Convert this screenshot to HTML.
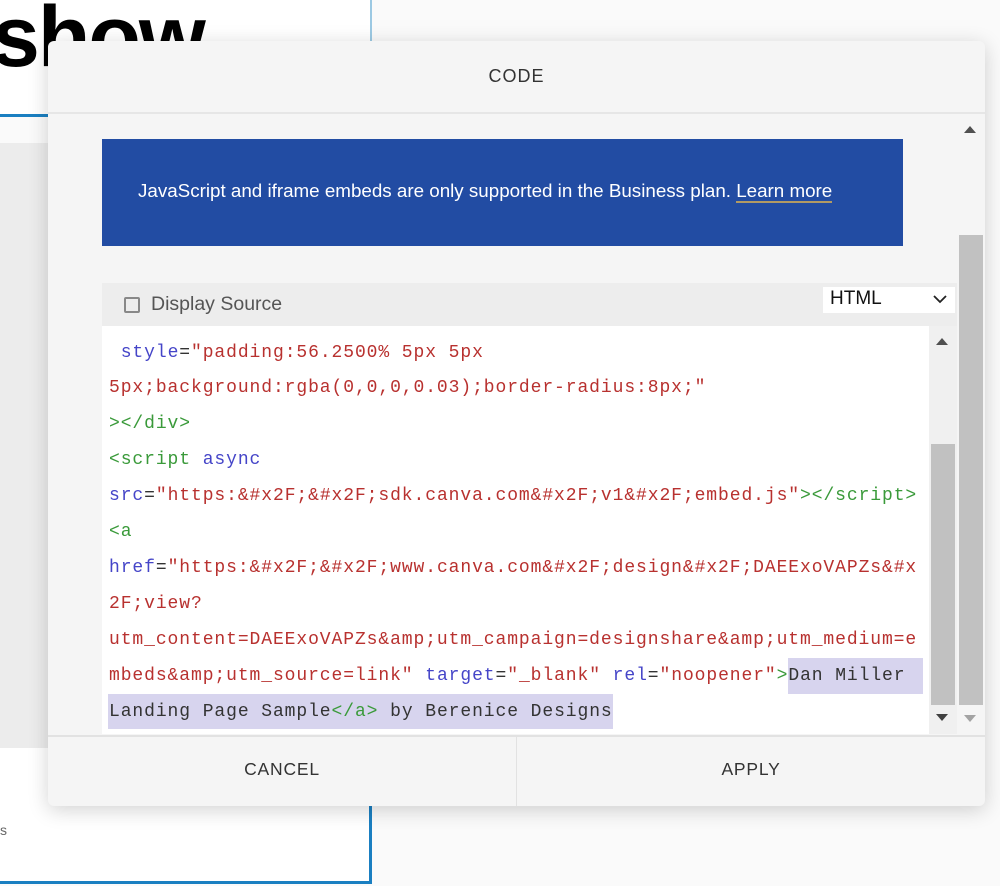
<!DOCTYPE html>
<html><head><style>
*{margin:0;padding:0;box-sizing:border-box}
body{width:1000px;height:886px;background:#fafafa;position:relative;overflow:hidden;font-family:"Liberation Sans",sans-serif}
.abs{position:absolute}
.code{font-family:"Liberation Mono",monospace;font-size:18px;letter-spacing:0.91px;color:#333;white-space:pre}
.cl{position:absolute;left:109px;height:36px;line-height:36px}
.a{color:#4545c8}.s{color:#b8312f}.t{color:#3a9a3a}.p{color:#333}
.hl{background:#d7d4ee}
</style></head><body>
<div class="abs" style="left:0;top:0;width:372px;height:115px;background:#fff"></div>
<div class="abs" style="left:-8px;top:-12px;font-size:86px;font-weight:bold;color:#000;font-family:'Liberation Sans',sans-serif;letter-spacing:-2px">show</div>
<div class="abs" style="left:370px;top:0;width:2px;height:42px;background:#9cc9e3"></div>
<div class="abs" style="left:0;top:114px;width:50px;height:3px;background:#1a7fc1"></div>
<div class="abs" style="left:0;top:143px;width:50px;height:605px;background:#ececec"></div>
<div class="abs" style="left:0;top:748px;width:372px;height:136px;background:#fff"></div>
<div class="abs" style="left:369px;top:800px;width:3px;height:84px;background:#1a7fc1"></div>
<div class="abs" style="left:0;top:881px;width:372px;height:3px;background:#1a7fc1"></div>
<div class="abs" style="left:0;top:822px;font-size:14px;color:#666">s</div>

<div class="abs" style="left:48px;top:41px;width:937px;height:765px;background:#f5f5f5;border-radius:6px;box-shadow:0 4px 20px rgba(0,0,0,.18);overflow:hidden">
 <div class="abs" style="left:0;top:0;width:937px;height:73px;border-bottom:2px solid #e6e6e6;text-align:center;line-height:70px;font-size:18px;letter-spacing:1px;color:#333">CODE</div>
 <div class="abs" style="left:54px;top:98px;width:801px;height:107px;background:#224ca3;color:#fff;font-size:18.8px;padding:41px 0 0 36px;white-space:nowrap">JavaScript and iframe embeds are only supported in the Business plan. <span style="border-bottom:2px solid #b29a63">Learn more</span></div>
 <div class="abs" style="left:54px;top:242px;width:855px;height:43px;background:#ededed"></div>
 <div class="abs" style="left:76px;top:256px;width:16px;height:16px;border:2px solid #888;border-radius:2px"></div>
 <div class="abs" style="left:103px;top:252px;font-size:19.5px;color:#555">Display Source</div>
 <div class="abs" style="left:775px;top:246px;width:132px;height:26px;background:#fff;font-size:19px;color:#111;padding:1px 0 0 7px">HTML<svg style="position:absolute;right:8px;top:8px" width="14" height="9" viewBox="0 0 14 9"><path d="M1 1l6 6 6-6" fill="none" stroke="#222" stroke-width="1.8"/></svg></div>
 <div class="abs" style="left:911px;top:194px;width:24px;height:470px;background:#c1c1c1"></div>
 <div class="abs" style="left:916px;top:85px;width:0;height:0;border-left:6px solid transparent;border-right:6px solid transparent;border-bottom:7px solid #505050"></div>
 <div class="abs" style="left:916px;top:674px;width:0;height:0;border-left:6px solid transparent;border-right:6px solid transparent;border-top:7px solid #a3a3a3"></div>
 <div class="abs" style="left:0;top:694px;width:937px;height:71px;border-top:2px solid #e2e2e2"></div>
 <div class="abs" style="left:468px;top:695px;width:1px;height:70px;background:#e2e2e2"></div>
 <div class="abs" style="left:0;top:695px;width:468px;height:70px;line-height:66px;text-align:center;font-size:17.5px;letter-spacing:.8px;color:#333">CANCEL</div>
 <div class="abs" style="left:469px;top:695px;width:468px;height:70px;line-height:66px;text-align:center;font-size:17.5px;letter-spacing:.8px;color:#333">APPLY</div>
</div>

<div class="abs" style="left:102px;top:326px;width:827px;height:408px;background:#fff"></div>
<div class="abs" style="left:929px;top:326px;width:28px;height:408px;background:#f0f0f0"></div>
<div class="abs" style="left:931px;top:444px;width:24px;height:261px;background:#c1c1c1"></div>
<div class="abs" style="left:936px;top:338px;border-left:6px solid transparent;border-right:6px solid transparent;border-bottom:7px solid #505050"></div>
<div class="abs" style="left:936px;top:714px;border-left:6px solid transparent;border-right:6px solid transparent;border-top:7px solid #404040"></div>
<div class="abs hl" style="left:788px;top:658px;width:135px;height:36px"></div>
<div class="abs hl" style="left:108px;top:694px;width:505px;height:35px"></div>
<div class="code">
<div class="cl" style="top:335px"> <span class="a">style</span>=<span class="s">"padding:56.2500% 5px 5px</span></div>
<div class="cl" style="top:370px"><span class="s">5px;background:rgba(0,0,0,0.03);border-radius:8px;"</span></div>
<div class="cl" style="top:406px"><span class="t">&gt;&lt;/div&gt;</span></div>
<div class="cl" style="top:442px"><span class="t">&lt;script</span> <span class="a">async</span></div>
<div class="cl" style="top:478px"><span class="a">src</span>=<span class="s">"https:&amp;#x2F;&amp;#x2F;sdk.canva.com&amp;#x2F;v1&amp;#x2F;embed.js"</span><span class="t">&gt;&lt;/script&gt;</span></div>
<div class="cl" style="top:514px"><span class="t">&lt;a</span></div>
<div class="cl" style="top:550px"><span class="a">href</span>=<span class="s">"https:&amp;#x2F;&amp;#x2F;www.canva.com&amp;#x2F;design&amp;#x2F;DAEExoVAPZs&amp;#x</span></div>
<div class="cl" style="top:586px"><span class="s">2F;view?</span></div>
<div class="cl" style="top:622px"><span class="s">utm_content=DAEExoVAPZs&amp;amp;utm_campaign=designshare&amp;amp;utm_medium=e</span></div>
<div class="cl" style="top:658px"><span class="s">mbeds&amp;amp;utm_source=link"</span> <span class="a">target</span>=<span class="s">"_blank"</span> <span class="a">rel</span>=<span class="s">"noopener"</span><span class="t">&gt;</span><span class="p">Dan Miller</span></div>
<div class="cl" style="top:694px"><span class="p">Landing Page Sample</span><span class="t">&lt;/a&gt;</span><span class="p"> by Berenice Designs</span></div>
</div>
</body></html>
